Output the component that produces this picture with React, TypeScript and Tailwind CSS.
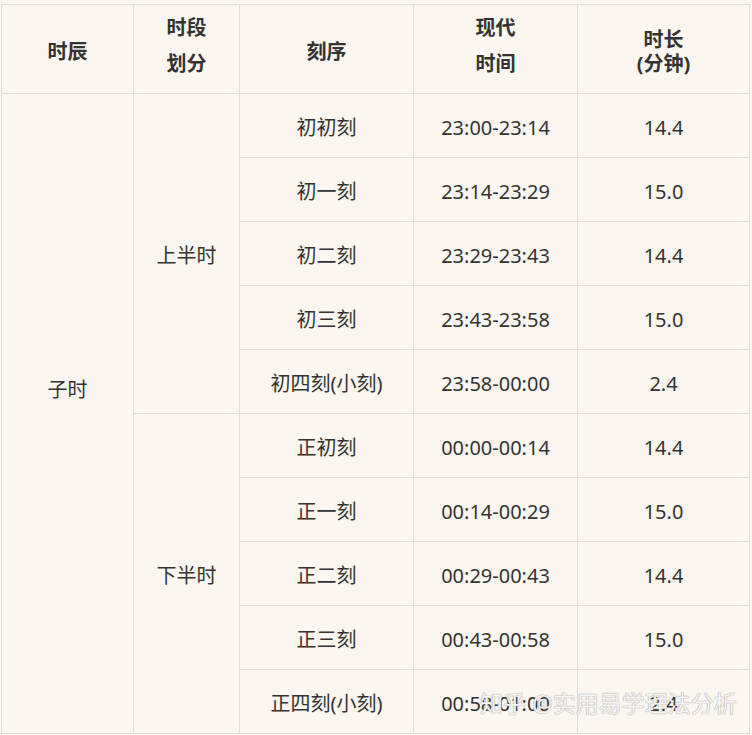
import React from "react";

const rows: { ke: string; time: string; dur: string }[] = [
  { ke: "初初刻", time: "23:00-23:14", dur: "14.4" },
  { ke: "初一刻", time: "23:14-23:29", dur: "15.0" },
  { ke: "初二刻", time: "23:29-23:43", dur: "14.4" },
  { ke: "初三刻", time: "23:43-23:58", dur: "15.0" },
  { ke: "初四刻(小刻)", time: "23:58-00:00", dur: "2.4" },
  { ke: "正初刻", time: "00:00-00:14", dur: "14.4" },
  { ke: "正一刻", time: "00:14-00:29", dur: "15.0" },
  { ke: "正二刻", time: "00:29-00:43", dur: "14.4" },
  { ke: "正三刻", time: "00:43-00:58", dur: "15.0" },
  { ke: "正四刻(小刻)", time: "00:58-01:00", dur: "2.4" },
];

const cell = "border border-[#e3dcd4] text-center align-middle";

export default function App() {
  return (
    <div
      className="relative w-[752px] h-[735px] bg-[#fcf6f0] pt-[4px] pl-[1px] text-[#333333]"
      style={{ fontFamily: '"Noto Sans", "Noto Sans CJK SC", sans-serif' }}
    >
      <table className="border-collapse w-[748px] table-fixed text-[20px]">
        <colgroup>
          <col className="w-[132px]" />
          <col className="w-[106px]" />
          <col className="w-[174px]" />
          <col className="w-[164px]" />
          <col className="w-[172px]" />
        </colgroup>
        <thead>
          <tr className="h-[89px] font-bold">
            <th className={`${cell} pt-[5px]`}>时辰</th>
            <th className={`${cell} leading-[36px] pb-[6px]`}>
              时段
              <br />
              划分
            </th>
            <th className={`${cell} pt-[5px]`}>刻序</th>
            <th className={`${cell} leading-[36px] pb-[6px]`}>
              现代
              <br />
              时间
            </th>
            <th className={`${cell} leading-[24px] pt-[5px]`}>
              时长
              <br />
              (分钟)
            </th>
          </tr>
        </thead>
        <tbody>
          {rows.map((r, i) => (
            <tr key={i} className="h-[64px]">
              {i === 0 && (
                <td rowSpan={10} className={`${cell} pb-[48px]`}>
                  子时
                </td>
              )}
              {i === 0 && (
                <td rowSpan={5} className={`${cell} pt-[4px]`}>
                  上半时
                </td>
              )}
              {i === 5 && (
                <td rowSpan={5} className={`${cell} pt-[4px]`}>
                  下半时
                </td>
              )}
              <td className={`${cell} pt-[4px]`}>{r.ke}</td>
              <td className={`${cell} pt-[4px]`}>{r.time}</td>
              <td className={`${cell} pt-[4px]`}>{r.dur}</td>
            </tr>
          ))}
        </tbody>
      </table>
      <div
        className="absolute left-[480px] top-[688px] text-[23px] whitespace-nowrap text-white/90 leading-[30px]"
        style={{ textShadow: "0 0 1px #9a9a9a, 0 0 1px #9a9a9a" }}
      >
        知乎 @实用易学理法分析
      </div>
    </div>
  );
}
